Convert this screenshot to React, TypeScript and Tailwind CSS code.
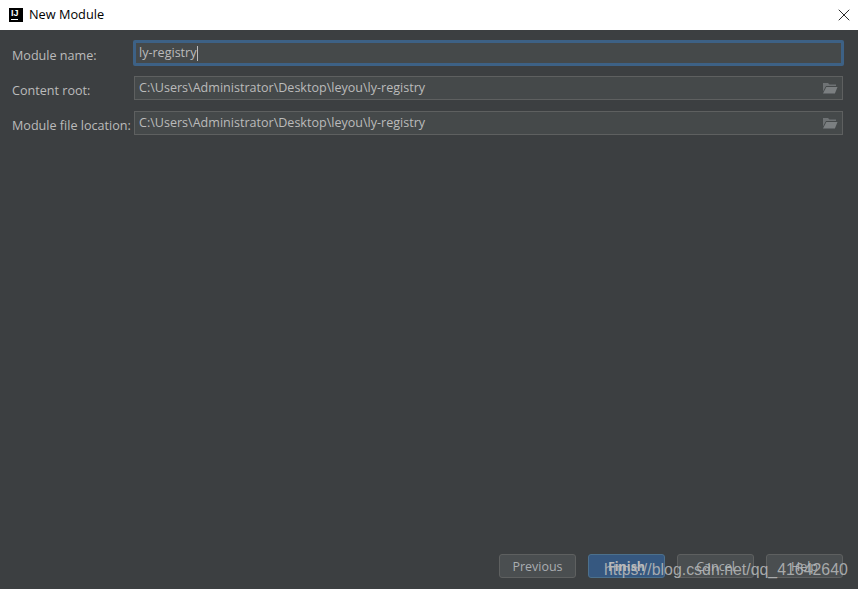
import { X } from 'lucide-react';

const FolderIcon = () => (
  <svg width="16" height="14" viewBox="0 0 16 14" className="shrink-0">
    <path d="M1 2h5l1.5 1.5H14V5H4L1 10.5z" fill="#6e7274" />
    <path d="M4.3 6H15.5l-2.6 6.5H1z" fill="#7b7f81" />
  </svg>
);

const Field = ({ label, value }: { label: string; value: string }) => (
  <div className="flex items-center h-6 mb-[11px]">
    <span className="w-[122px] shrink-0 text-[#bbbbbb] text-[12.6px] pt-1.5 whitespace-nowrap">{label}</span>
    <div className="flex-1 h-6 flex items-center justify-between bg-[#45494a] border border-[#5e6060] pl-1 pr-[4px]">
      <span className="text-[#bbbbbb] text-[12.55px]">{value}</span>
      <FolderIcon />
    </div>
  </div>
);

const Button = ({ label, primary }: { label: string; primary?: boolean }) => (
  <button
    className={`w-[77px] h-6 pt-0.5 rounded-[3px] border text-[12.5px] ${
      primary ? 'bg-[#365880] border-[#4c708c] text-[#bbbbbb] font-bold' : 'bg-[#4a4e50] border-[#5e6060] text-[#a9adb0]'
    }`}
  >
    {label}
  </button>
);

export default function App() {
  return (
    <div className="relative w-[858px] h-[589px] flex flex-col overflow-hidden font-['Open_Sans',sans-serif] text-[13px]">
      <div className="h-[30px] shrink-0 bg-white flex items-center pl-[9px] pr-[4px]">
        <div className="w-[14px] h-[14px] bg-black mr-[6px] flex flex-col items-start pl-[2px] pt-px shrink-0">
          <span className="text-white text-[9px] font-bold leading-[9px] font-['Liberation_Sans',sans-serif]">IJ</span>
          <span className="w-[7px] h-px bg-white mt-px" />
        </div>
        <span className="text-black text-[12.75px]">New Module</span>
        <X className="ml-auto text-black" size={20} strokeWidth={1} />
      </div>

      <main className="flex-1 bg-[#3c3f41] flex flex-col pl-3 pr-[15px] pt-[10px] pb-[11px]">
        <div className="flex items-center h-[26px] mb-[10px] -mr-px">
          <span className="w-[121px] shrink-0 text-[#bbbbbb] text-[12.6px] pt-1.5 whitespace-nowrap">Module name:</span>
          <div className="flex-1 h-[26px] flex items-center bg-[#45494a] border-[3px] border-[#3d6185] rounded-[2px] pl-[3px]">
            <span className="text-[#bbbbbb] text-[12.55px]">ly-registry</span>
            <span className="w-px h-[15px] bg-[#bbbbbb]" />
          </div>
        </div>
        <Field label="Content root:" value="C:\Users\Administrator\Desktop\leyou\ly-registry" />
        <Field label="Module file location:" value="C:\Users\Administrator\Desktop\leyou\ly-registry" />

        <div className="mt-auto flex justify-end gap-3">
          <Button label="Previous" />
          <Button label="Finish" primary />
          <Button label="Cancel" />
          <Button label="Help" />
        </div>
      </main>

      <span className="absolute left-[604px] top-[559px] text-[15.9px] leading-[22px] text-[#b4b6b7]/90 font-['Liberation_Sans',sans-serif] whitespace-nowrap">
        https://blog.csdn.net/qq_41642640
      </span>
    </div>
  );
}
